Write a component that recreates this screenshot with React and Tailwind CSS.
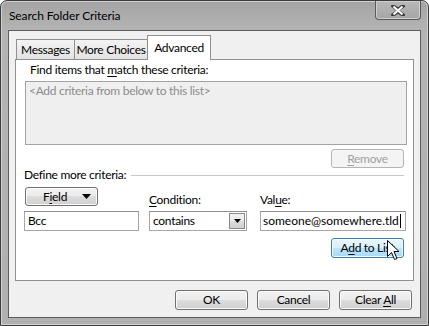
import React from "react";

const btnBase =
  "h-[20px] w-[73px] rounded-[3px] border flex items-center justify-center leading-none";
const btnNormal =
  "border-[#707070] bg-[linear-gradient(#f2f2f2_0%,#ebebeb_50%,#dddddd_50%,#cfcfcf_100%)] shadow-[inset_0_0_0_1px_#fbfbfb] text-black";

function Btn({ children, className = "" }) {
  return <div className={`${btnBase} ${btnNormal} ${className}`}>{children}</div>;
}

export default function App() {
  return (
    <div className="w-[429px] h-[326px] bg-white overflow-hidden font-['Lato',sans-serif] text-[12px] text-black whitespace-nowrap tracking-[-0.3px]">
      <div className="relative w-full h-full rounded-t-[7px] border border-[#3c3c3c] bg-[linear-gradient(#a4a4a4,#b4b4b4_30px,#b0b0b0)] shadow-[inset_0_0_0_1px_#d2d2d2] flex flex-col">
        {/* Title bar */}
        <div className="h-[29px] flex items-start justify-between">
          <div className="pl-[8px] pt-[7px] leading-[16px] text-[12px] tracking-[-0.1px]">Search Folder Criteria</div>
          <div className="mr-[7px] w-[46px] h-[19px] rounded-b-[4px] border border-t-0 border-[#5a5a5a] bg-[linear-gradient(#b8b8b8,#a6a6a6)] shadow-[inset_0_0_0_1px_#cfcfcf] flex items-center justify-center">
            <svg width="14" height="11" viewBox="0 0 14 11">
              <path d="M2 1 L7 4.5 L12 1 M2 10 L7 6.5 L12 10" stroke="#3a3a3a" strokeWidth="3.6" fill="none" strokeLinecap="square" />
              <path d="M2.5 1.5 L11.5 9.5 M11.5 1.5 L2.5 9.5" stroke="#ffffff" strokeWidth="2" fill="none" />
            </svg>
          </div>
        </div>
        {/* Client area */}
        <div className="mx-[7px] mb-[7px] flex-1 border border-[#5c5c5c] bg-[#f0f0f0] flex flex-col">
          {/* Tabs */}
          <div className="flex items-end pl-[7px] pt-[4px] relative z-10">
            <div className="w-[59px] h-[20px] border border-b-0 border-[#919191] bg-[linear-gradient(#f3f3f3,#e3e3e3)] flex items-center justify-center pt-[1px]">Messages</div>
            <div className="w-[73px] h-[20px] border border-l-0 border-b-0 border-[#919191] bg-[linear-gradient(#f3f3f3,#e3e3e3)] flex items-center justify-center pt-[1px]">More Choices</div>
            <div className="-ml-[1px] -mb-px w-[64px] h-[25px] border border-b-0 border-[#919191] bg-white flex items-start justify-center pt-[3px]">Advanced</div>
          </div>
          {/* Panel */}
          <div className="ml-[6px] w-[399px] h-[222px] border border-[#919191] bg-white flex flex-col relative">
            <div className="ml-[14px] mt-[2px] leading-[16px]">
              Find items that <u className="underline-offset-2">m</u>atch these criteria:
            </div>
            <div className="ml-[9px] mt-[3px] w-[382px] h-[64px] border border-[#a3a3a3] bg-[#efefef] pl-[3px] pt-[1px] leading-[16px] text-[#8c8c8c]">
              &lt;Add criteria from below to this list&gt;
            </div>
            <div className="self-end mr-[9px] mt-[4px] h-[19px] w-[73px] rounded-[3px] border border-[#b5b5b5] bg-[#f4f4f4] flex items-center justify-center text-[#a0a0a0] leading-none">
              <span><u className="underline-offset-2">R</u>emove</span>
            </div>
            <div className="flex items-center ml-[8px] mr-[9px] -mt-[1px] leading-[16px]">
              <span>Define more criteria:</span>
              <div className="flex-1 ml-[5px] h-px bg-[#c8c8c8]" />
            </div>
            {/* Criteria row */}
            <div className="flex items-end ml-[8px] mt-[4px]">
              <div className="flex flex-col w-[115px]">
                <div className="ml-[1px] h-[19px] w-[73px] rounded-[3px] border border-[#707070] bg-[linear-gradient(#f2f2f2_0%,#ebebeb_50%,#dddddd_50%,#cfcfcf_100%)] shadow-[inset_0_0_0_1px_#fbfbfb] flex items-center pl-[17px] pr-[6px] leading-none">
                  <span>F<u className="underline-offset-2">i</u>eld</span>
                  <svg className="ml-auto" width="9" height="5" viewBox="0 0 9 5"><path d="M0 0 H9 L4.5 5 Z" fill="#000" /></svg>
                </div>
                <div className="mt-[5px] h-[20px] w-[115px] border border-[#a6a6a6] border-t-[#8f8f8f] bg-white pl-[3px] flex items-center">Bcc</div>
              </div>
              <div className="flex flex-col ml-[10px] w-[98px]">
                <div className="leading-[16px] mb-[3px]"><u className="underline-offset-2">C</u>ondition:</div>
                <div className="h-[20px] w-[98px] border border-[#a6a6a6] border-t-[#8f8f8f] bg-white flex items-center">
                  <span className="pl-[3px]">contains</span>
                  <div className="ml-auto mr-px h-[16px] w-[16px] border border-[#8a8a8a] bg-[linear-gradient(#f2f2f2_0%,#ebebeb_50%,#dddddd_50%,#cfcfcf_100%)] flex items-center justify-center">
                    <svg width="7" height="4" viewBox="0 0 7 4"><path d="M0 0 H7 L3.5 4 Z" fill="#000" /></svg>
                  </div>
                </div>
              </div>
              <div className="flex flex-col ml-[13px] w-[146px]">
                <div className="leading-[16px] mb-[3px]">Val<u className="underline-offset-2">u</u>e:</div>
                <div className="h-[20px] w-[146px] border border-[#a6a6a6] border-t-[#8f8f8f] bg-white pl-[2px] flex items-center tracking-normal">
                  <span>someone@somewhere.tld</span>
                  <span className="ml-px w-px h-[14px] bg-black" />
                </div>
              </div>
            </div>
            <div className="self-end mr-[9px] mt-[7px] h-[20px] w-[73px] rounded-[3px] border border-[#3c7fb1] bg-[linear-gradient(#eaf6fd_0%,#d9f0fc_50%,#bee6fd_50%,#a7d9f5_100%)] shadow-[inset_0_0_0_1px_#f4fbff] flex items-center justify-center leading-none">
              <span>A<u className="underline-offset-2">d</u>d to List</span>
            </div>
            {/* cursor */}
            <svg className="absolute left-[371px] top-[180px]" width="13" height="21" viewBox="0 0 13 21">
              <path d="M0.5 0.5 L0.5 16.5 L4.5 12.5 L7.5 19.5 L10 18.5 L7 11.5 L12 11.5 Z" fill="#fff" stroke="#000" strokeWidth="1" strokeLinejoin="miter" />
            </svg>
          </div>
          {/* Bottom buttons */}
          <div className="flex justify-end gap-[9px] mt-[9px] pr-[8px]">
            <Btn>OK</Btn>
            <Btn>Cancel</Btn>
            <Btn><span>Clear <u className="underline-offset-2">A</u>ll</span></Btn>
          </div>
        </div>
      </div>
    </div>
  );
}
